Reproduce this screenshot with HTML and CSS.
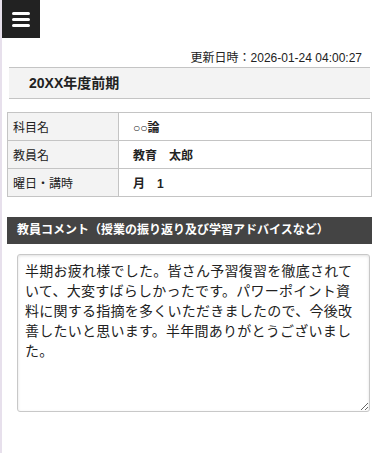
FILE: index.html
```html
<!DOCTYPE html>
<html lang="ja">
<head>
<meta charset="utf-8">
<title>授業評価</title>
<link rel="stylesheet" href="styles.css">
</head>
<body>
<div class="page">
  <button class="menu-btn" aria-label="メニュー">
    <svg width="18" height="15" viewBox="0 0 18 15">
      <path d="M1.5 1.5H16.5M1.5 7.5H16.5M1.5 13.5H16.5" stroke="#fff" stroke-width="3" stroke-linecap="round" fill="none"/>
    </svg>
  </button>
  <div class="updated">更新日時：2026-01-24 04:00:27</div>
  <h2 class="term">20XX年度前期</h2>
  <table class="info">
    <tr><th>科目名</th><td>○○論</td></tr>
    <tr><th>教員名</th><td>教育　太郎</td></tr>
    <tr><th>曜日・講時</th><td>月　1</td></tr>
  </table>
  <h3 class="section">教員コメント（授業の振り返り及び学習アドバイスなど）</h3>
  <textarea class="comment" readonly>半期お疲れ様でした。皆さん予習復習を徹底されて
いて、大変すばらしかったです。パワーポイント資
料に関する指摘を多くいただきましたので、今後改
善したいと思います。半年間ありがとうございまし
た。</textarea>
</div>
</body>
</html>
```

FILE: styles.css
```css
* { box-sizing: border-box; }
html, body { margin: 0; padding: 0; background: #fff; }
body {
  font-family: "Liberation Sans", "Noto Sans CJK JP", sans-serif;
  color: #222;
}
.page {
  border-left: 2px solid #e7e0ec;
  min-height: 453px;
}
.menu-btn {
  display: flex;
  align-items: center;
  justify-content: center;
  width: 38px;
  height: 38px;
  padding: 0;
  margin: 0;
  border: 0;
  background: #222;
}
.updated {
  margin: 13px 15px 0 0;
  font-size: 12px;
  line-height: 14px;
  text-align: right;
  color: #222;
}
.term {
  margin: 2px 7px 0 7px;
  height: 32px;
  padding-left: 20px;
  border-top: 1px solid #c4c4c4;
  border-bottom: 1px solid #c4c4c4;
  background: #f3f3f3;
  font-size: 14px;
  font-weight: bold;
  line-height: 30px;
  color: #222;
}
.info {
  margin: 13px 0 0 5px;
  width: 365px;
  border-collapse: collapse;
  font-size: 12px;
}
.info th, .info td {
  border: 1px solid #c4c4c4;
  height: 28px;
  padding: 0;
  text-align: left;
  vertical-align: middle;
}
.info th {
  width: 111px;
  padding-left: 5px;
  background: #f3f3f3;
  font-weight: normal;
}
.info td {
  padding-left: 14px;
  font-weight: bold;
  background: #fff;
}
.section {
  margin: 20px 5px 0 5px;
  height: 27px;
  padding-left: 10px;
  background: #444;
  color: #fff;
  font-size: 12px;
  font-weight: bold;
  line-height: 27px;
}
.comment {
  display: block;
  margin: 10px 0 0 15px;
  width: 353px;
  height: 158px;
  padding: 6px 7px;
  border: 1px solid #c8c8c8;
  border-radius: 3px;
  box-shadow: inset 0 1px 3px rgba(0,0,0,0.12);
  font-family: "Liberation Sans", "Noto Sans CJK JP", sans-serif;
  font-size: 14px;
  letter-spacing: 0.25px;
  line-height: 20px;
  color: #222;
  background: #fff;
  overflow: hidden;
}
```
